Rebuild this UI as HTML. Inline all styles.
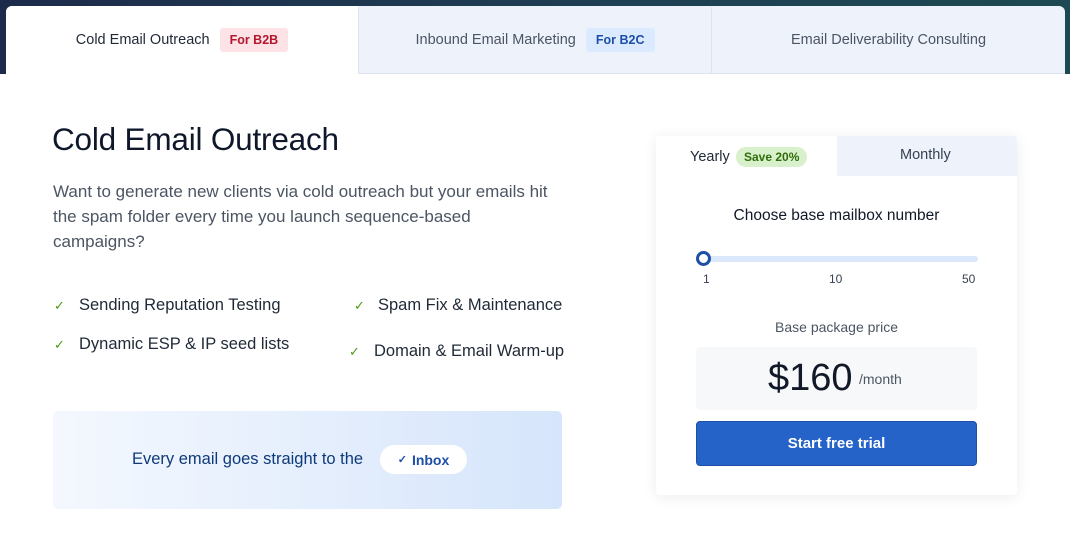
<!DOCTYPE html>
<html><head><meta charset="utf-8"><style>
*{margin:0;padding:0;box-sizing:border-box}
body{width:1070px;height:537px;overflow:hidden;background:#fff;font-family:"Liberation Sans",sans-serif;position:relative}
.abs{position:absolute;white-space:nowrap}
.topbg{position:absolute;left:0;top:0;width:1070px;height:74px;background:linear-gradient(90deg,#1d2b4a,#1f3d52 50%,#1d4a52)}
.tabs{position:absolute;left:6px;top:6px;width:1059px;height:68px;border-radius:6px 6px 0 0;overflow:hidden;background:#eef3fb}
.tab{position:absolute;top:1px;height:67px;display:flex;align-items:center;justify-content:center;font-size:14.5px;color:#4b5563}
.badge{font-size:12.5px;font-weight:bold;padding:5px 10px;border-radius:3px;margin-left:10px}
.chk{color:#4d9a12;font-size:13px}
.feat{font-size:16.5px;color:#1f2937}
</style></head><body>
<div class="topbg"></div>
<div class="tabs">
 <div class="tab" style="left:0;width:352px;background:#fff;color:#1f2937;top:0;height:68px">Cold Email Outreach<span class="badge" style="background:#fde3e5;color:#b4162d">For B2B</span></div>
 <div class="tab" style="left:352px;width:353px;border-left:1px solid #dfe4ec;border-bottom:1px solid #dfe4ec">Inbound Email Marketing<span class="badge" style="background:#dbeafe;color:#1e4fa6">For B2C</span></div>
 <div class="tab" style="left:705px;width:354px;border-left:1px solid #dfe4ec;border-bottom:1px solid #dfe4ec">Email Deliverability Consulting</div>
</div>

<div class="abs" style="left:52px;top:121px;font-size:31.5px;color:#0f172a;letter-spacing:-0.2px">Cold Email Outreach</div>
<div class="abs" style="left:53px;top:179px;font-size:17px;line-height:25px;color:#4b5563;white-space:normal;width:500px">Want to generate new clients via cold outreach but your emails hit the spam folder every time you launch sequence-based campaigns?</div>

<div class="abs chk" style="left:54px;top:298px">✓</div><div class="abs feat" style="left:79px;top:296px">Sending Reputation Testing</div>
<div class="abs chk" style="left:54px;top:337px">✓</div><div class="abs feat" style="left:79px;top:335px">Dynamic ESP &amp; IP seed lists</div>
<div class="abs chk" style="left:354px;top:298px">✓</div><div class="abs feat" style="left:378px;top:296px">Spam Fix &amp; Maintenance</div>
<div class="abs chk" style="left:349px;top:344px">✓</div><div class="abs feat" style="left:374px;top:342px">Domain &amp; Email Warm-up</div>

<div class="abs" style="left:53px;top:411px;width:509px;height:98px;border-radius:5px;background:linear-gradient(90deg,#f4f8fe,#d6e5fb)"></div>
<div class="abs" style="left:132px;top:450px;font-size:16.5px;color:#0f3a7a">Every email goes straight to the</div>
<div class="abs" style="left:380px;top:445px;width:87px;height:29px;border-radius:15px;background:#fff;display:flex;align-items:center;justify-content:center;font-size:14px;font-weight:bold;color:#1e4fa6"><span style="font-size:11px;margin-right:5px">✓</span>Inbox</div>

<div class="abs" style="left:656px;top:136px;width:361px;height:359px;background:#fff;border-radius:4px;box-shadow:0 2px 14px rgba(0,0,0,0.08)"></div>
<div class="abs" style="left:837px;top:136px;width:180px;height:40px;background:#eef3fb;border-radius:0 4px 0 0"></div>
<div class="abs" style="left:690px;top:149px;font-size:14.5px;color:#1f2937">Yearly</div>
<div class="abs" style="left:736px;top:147px;padding:3px 8px;border-radius:11px;background:#d8f0cb;color:#2f6d0b;font-size:12px;font-weight:bold">Save 20%</div>
<div class="abs" style="left:900px;top:147px;font-size:14.5px;color:#374151">Monthly</div>
<div class="abs" style="left:656px;top:207px;width:361px;text-align:center;font-size:15.5px;color:#111827">Choose base mailbox number</div>
<div class="abs" style="left:700px;top:256px;width:278px;height:6px;border-radius:3px;background:#dbe8fc"></div>
<div class="abs" style="left:696px;top:251px;width:15px;height:15px;border-radius:50%;background:#fff;border:3.5px solid #1e4fa6"></div>
<div class="abs" style="left:703px;top:272px;font-size:12px;color:#374151">1</div>
<div class="abs" style="left:829px;top:272px;font-size:12px;color:#374151">10</div>
<div class="abs" style="left:962px;top:272px;font-size:12px;color:#374151">50</div>
<div class="abs" style="left:656px;top:319px;width:361px;text-align:center;font-size:14px;color:#4b5563">Base package price</div>
<div class="abs" style="left:696px;top:347px;width:281px;height:63px;border-radius:4px;background:#f7f8fa"></div>
<div class="abs" style="left:768px;top:357px;font-size:38px;color:#111827">$160</div>
<div class="abs" style="left:859px;top:371px;font-size:14px;color:#4b5563">/month</div>
<div class="abs" style="left:696px;top:421px;width:281px;height:45px;border-radius:4px;background:#2563c9;border:1px solid #1e4fa6;display:flex;align-items:center;justify-content:center;color:#fff;font-size:15px;font-weight:bold">Start free trial</div>
</body></html>
